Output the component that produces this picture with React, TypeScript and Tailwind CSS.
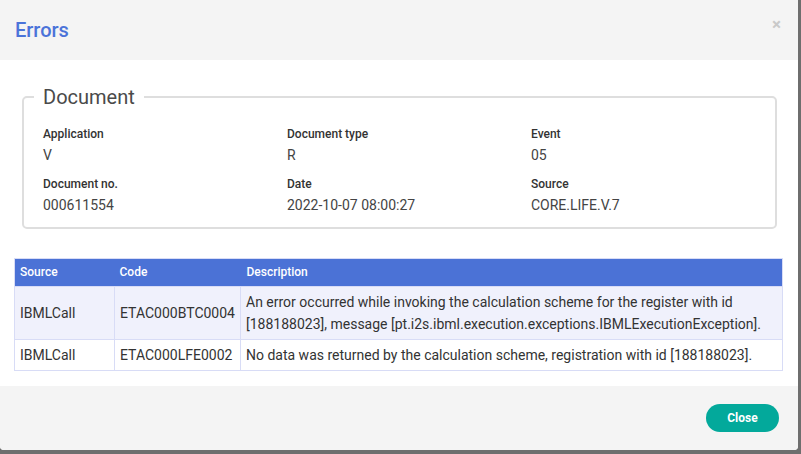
const fields = [
  { label: 'Application', value: 'V' },
  { label: 'Document type', value: 'R' },
  { label: 'Event', value: '05' },
  { label: 'Document no.', value: '000611554' },
  { label: 'Date', value: '2022-10-07 08:00:27' },
  { label: 'Source', value: 'CORE.LIFE.V.7' },
];

const errors = [
  {
    source: 'IBMLCall',
    code: 'ETAC000BTC0004',
    description:
      'An error occurred while invoking the calculation scheme for the register with id [188188023], message [pt.i2s.ibml.execution.exceptions.IBMLExecutionException].',
  },
  {
    source: 'IBMLCall',
    code: 'ETAC000LFE0002',
    description: 'No data was returned by the calculation scheme, registration with id [188188023].',
  },
];

export default function App() {
  return (
    <div className="w-[801px] h-[454px] bg-[#6e6e6e] flex overflow-hidden font-['Roboto',sans-serif]">
      <div className="w-[798px] h-[450px] bg-white rounded-b-[4px] flex flex-col overflow-hidden">
        {/* header */}
        <div className="h-[60px] bg-[#f4f4f4] flex items-center justify-between pl-[15px] pr-[17px]">
          <h2 className="text-[20px] font-medium text-[#4b73d9] leading-none">Errors</h2>
          <span className="text-[17px] text-[#c9c9c9] font-bold leading-none -mt-[10px]">×</span>
        </div>

        {/* body */}
        <div className="flex-1 pt-[25px] px-[14px] pb-[15px]">
          <fieldset className="mx-[8px] border-2 border-[#dedede] rounded-[5px] pb-[12px] pt-[17px]">
            <legend className="ml-[10px] px-[9px] text-[20px] text-[#4a4a4a] leading-[24px]">Document</legend>
            <div className="pl-[19px] grid grid-cols-[244px_244px_244px] gap-y-[11px]">
              {fields.map((f) => (
                <div key={f.label} className="flex flex-col gap-[3px]">
                  <span className="text-[12px] font-medium text-[#333] leading-[16px]">{f.label}</span>
                  <span className="text-[14px] text-[#444] leading-[20px]">{f.value}</span>
                </div>
              ))}
            </div>
          </fieldset>

          <table className="mt-[29px] w-[769px] border-collapse border border-[#d8dcf6] text-left">
            <thead>
              <tr className="bg-[#4b72d6] text-white text-[12px] h-[28px]">
                <th className="w-[100px] pl-[5px] font-medium">Source</th>
                <th className="w-[126px] pl-[5px] font-medium">Code</th>
                <th className="pl-[6px] font-medium">Description</th>
              </tr>
            </thead>
            <tbody className="text-[14px] text-[#333] leading-[22px]">
              {errors.map((e, i) => (
                <tr key={e.code} className={i === 0 ? 'bg-[#f0f1fc]' : 'bg-white'}>
                  <td className="border border-[#d8dcf6] px-[5px] py-[4px]">{e.source}</td>
                  <td className="border border-[#d8dcf6] px-[5px] py-[4px]">{e.code}</td>
                  <td className="border border-[#d8dcf6] px-[5px] py-[4px]">{e.description}</td>
                </tr>
              ))}
            </tbody>
          </table>
        </div>

        {/* footer */}
        <div className="h-[65px] bg-[#f4f4f4] flex items-center justify-end pr-[19px]">
          <button className="w-[73px] h-[28px] rounded-full bg-[#03a99b] text-white text-[12px] font-bold">
            Close
          </button>
        </div>
      </div>
    </div>
  );
}
